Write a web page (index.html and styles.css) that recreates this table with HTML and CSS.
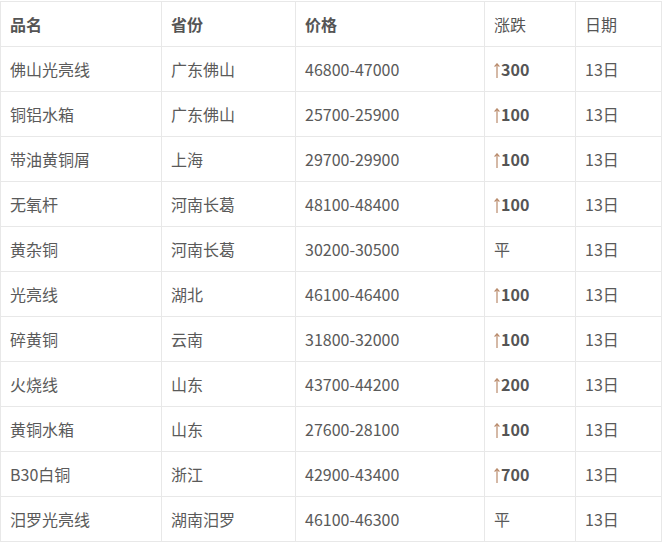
FILE: index.html
```html
<!DOCTYPE html>
<html lang="zh">
<head>
<meta charset="utf-8">
<link rel="stylesheet" href="styles.css">
</head>
<body>
<table class="price-table">
  <colgroup>
    <col class="c1"><col class="c2"><col class="c3"><col class="c4"><col class="c5">
  </colgroup>
  <thead>
    <tr><th class="bold">品名</th><th class="bold">省份</th><th class="bold">价格</th><th>涨跌</th><th>日期</th></tr>
  </thead>
  <tbody>
    <tr><td>佛山光亮线</td><td>广东佛山</td><td>46800-47000</td><td><svg class="up" viewBox="0 0 6 15" aria-label="↑"><path d="M3 0.8V15M0.6 3.6L3 0.8L5.4 3.6"/></svg><b>300</b></td><td>13日</td></tr>
    <tr><td>铜铝水箱</td><td>广东佛山</td><td>25700-25900</td><td><svg class="up" viewBox="0 0 6 15" aria-label="↑"><path d="M3 0.8V15M0.6 3.6L3 0.8L5.4 3.6"/></svg><b>100</b></td><td>13日</td></tr>
    <tr><td>带油黄铜屑</td><td>上海</td><td>29700-29900</td><td><svg class="up" viewBox="0 0 6 15" aria-label="↑"><path d="M3 0.8V15M0.6 3.6L3 0.8L5.4 3.6"/></svg><b>100</b></td><td>13日</td></tr>
    <tr><td>无氧杆</td><td>河南长葛</td><td>48100-48400</td><td><svg class="up" viewBox="0 0 6 15" aria-label="↑"><path d="M3 0.8V15M0.6 3.6L3 0.8L5.4 3.6"/></svg><b>100</b></td><td>13日</td></tr>
    <tr><td>黄杂铜</td><td>河南长葛</td><td>30200-30500</td><td>平</td><td>13日</td></tr>
    <tr><td>光亮线</td><td>湖北</td><td>46100-46400</td><td><svg class="up" viewBox="0 0 6 15" aria-label="↑"><path d="M3 0.8V15M0.6 3.6L3 0.8L5.4 3.6"/></svg><b>100</b></td><td>13日</td></tr>
    <tr><td>碎黄铜</td><td>云南</td><td>31800-32000</td><td><svg class="up" viewBox="0 0 6 15" aria-label="↑"><path d="M3 0.8V15M0.6 3.6L3 0.8L5.4 3.6"/></svg><b>100</b></td><td>13日</td></tr>
    <tr><td>火烧线</td><td>山东</td><td>43700-44200</td><td><svg class="up" viewBox="0 0 6 15" aria-label="↑"><path d="M3 0.8V15M0.6 3.6L3 0.8L5.4 3.6"/></svg><b>200</b></td><td>13日</td></tr>
    <tr><td>黄铜水箱</td><td>山东</td><td>27600-28100</td><td><svg class="up" viewBox="0 0 6 15" aria-label="↑"><path d="M3 0.8V15M0.6 3.6L3 0.8L5.4 3.6"/></svg><b>100</b></td><td>13日</td></tr>
    <tr><td>B30白铜</td><td>浙江</td><td>42900-43400</td><td><svg class="up" viewBox="0 0 6 15" aria-label="↑"><path d="M3 0.8V15M0.6 3.6L3 0.8L5.4 3.6"/></svg><b>700</b></td><td>13日</td></tr>
    <tr><td>汨罗光亮线</td><td>湖南汨罗</td><td>46100-46300</td><td>平</td><td>13日</td></tr>
  </tbody>
</table>
</body>
</html>
```

FILE: styles.css
```css
html, body {
  margin: 0;
  padding: 0;
  background: #fff;
}
body {
  padding-top: 1px;
  font-family: "Microsoft YaHei", "Noto Sans CJK SC", "Noto Sans", sans-serif;
  font-size: 16px;
  color: #5a5a5a;
}
.price-table {
  border-collapse: collapse;
  table-layout: fixed;
  width: 661px;
}
.c1 { width: 161px; }
.c2 { width: 134px; }
.c3 { width: 189px; }
.c4 { width: 91px; }
.c5 { width: 86px; }
.price-table th,
.price-table td {
  border: 1px solid #e8e8e8;
  box-sizing: border-box;
  height: 45px;
  padding: 0 9px;
  text-align: left;
  vertical-align: middle;
  line-height: 20px;
}
.price-table th {
  font-weight: normal;
  color: #555;
}
.price-table th.bold {
  font-weight: bold;
}
.price-table b {
  font-weight: bold;
  color: #555;
}
.up {
  width: 6px;
  height: 15px;
  margin-right: 1px;
  vertical-align: -2px;
  fill: none;
  stroke: #b98b6c;
  stroke-width: 1.2;
}
```
